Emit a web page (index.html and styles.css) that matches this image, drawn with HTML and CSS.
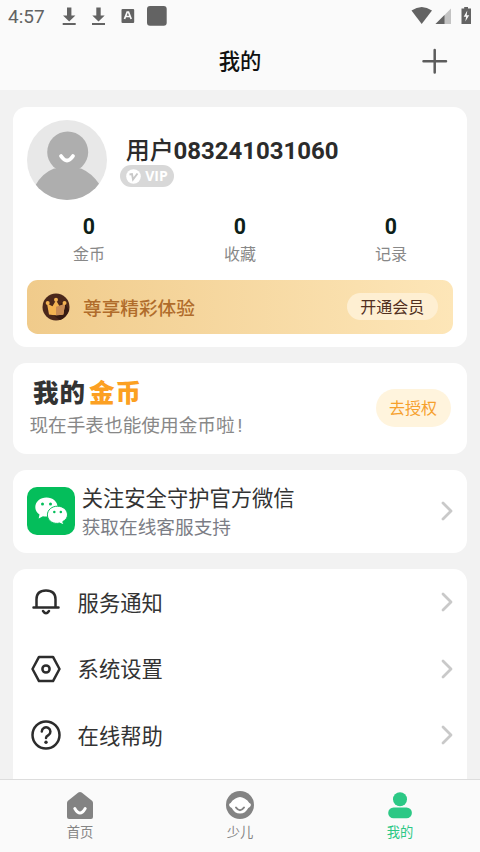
FILE: index.html
```html
<!DOCTYPE html>
<html lang="zh-CN">
<head>
<meta charset="utf-8">
<title>我的</title>
<link rel="stylesheet" href="styles.css">
</head>
<body>
<div class="app">
  <header class="top">
    <div class="status">
      <span class="time">4:57</span>
      <svg class="st-left" width="120" height="24" viewBox="0 0 120 24" fill="#636363">
        <path d="M9 3.500h4.400v8h4L11.200 17.500 5 11.500h4zM4.700 19h13v2h-13z"/>
        <path d="M38.300 3.500h4.400v8h4L40.500 17.500 34.300 11.500h4zM34 19h13v2H34z"/>
        <rect x="63.500" y="5" width="12.700" height="14" rx="1"/>
        <path d="M66.500 15l2.700-7h1.300l2.700 7M67.500 12.500h4.700" fill="none" stroke="#fafafa" stroke-width="1.700"/>
        <rect x="89" y="2" width="19.700" height="19.700" rx="3"/>
      </svg>
      <svg class="st-right" width="64" height="24" viewBox="0 0 64 24" fill="#636363">
        <path d="M1.500 6.500Q11.700-.5 22 6.500L11.700 20z"/>
        <path d="M25.500 20L41 4.500V20z" fill="#c3c3c3"/><path d="M25.500 20L34.500 11v9z"/>
        <path d="M51.500 4.500h2.700V3h3.800v1.500h3V20h-9.500z"/>
        <path d="M57.300 6.500l-3.600 6.200h2.400l-.8 4.800 3.900-6.300h-2.500z" fill="#fafafa"/>
      </svg>
    </div>
    <div class="titlebar">
      <span></span><h1>我的</h1>
      <svg class="plus" width="26" height="26" viewBox="0 0 26 26"><path d="M12.700 2v22.500M1.500 13.200H24" stroke="#5c5c5c" stroke-width="2.500" stroke-linecap="round"/></svg>
    </div>
  </header>
  <main>
    <section class="card profile">
      <div class="user">
        <svg class="avatar" width="80" height="80" viewBox="0 0 80 80">
          <defs><clipPath id="round"><circle cx="40" cy="40" r="40"/></clipPath></defs>
          <circle cx="40" cy="40" r="40" fill="#e8e8e8"/>
          <g clip-path="url(#round)" fill="#aeaeae"><circle cx="40.700" cy="32" r="20.500"/><path d="M27 48.500H54Q65 53 73 65V80H8V66Q15 53 27 48.500z"/></g>
          <path d="M34 36Q40 45 46 36" fill="none" stroke="#fff" stroke-width="3.800" stroke-linecap="round"/>
        </svg>
        <div class="ident">
          <div class="name"><span>用户</span>083241031060</div>
          <div class="vip"><svg width="15" height="15" viewBox="0 0 15 15"><circle cx="7.500" cy="7.500" r="7.300" fill="#fff"/><path d="M3.500 5.500L6 5l1 5.500 4.500-6" fill="none" stroke="#c8c8c8" stroke-width="1.900"/></svg><span>VIP</span></div>
        </div>
      </div>
      <div class="stats">
        <div><b>0</b><span>金币</span></div>
        <div><b>0</b><span>收藏</span></div>
        <div><b>0</b><span>记录</span></div>
      </div>
      <div class="member">
        <svg width="28" height="28" viewBox="0 0 28 28">
          <circle cx="14" cy="14" r="13.500" fill="#4b281b"/>
          <path d="M11 22l10-14 6 9Q24 25 18 27z" fill="#351a13"/>
          <path d="M7 21.500L5 10.500l5.500 2.700 3.500-6 3.500 6 5.700-2.700-1.900 11q-7.200 1.600-14.300 0z" fill="#f3b352"/>
          <path d="M20 11.700l3.200-1.200-1.900 11q-3.500.8-7.300.8v-8.500z" fill="#c88c56"/>
          <circle cx="5.700" cy="10" r="2" fill="#f3b352"/><circle cx="14" cy="6.700" r="2" fill="#f3b352"/><circle cx="22.500" cy="10" r="2" fill="#f3b352"/>
        </svg>
        <span class="slogan">尊享精彩体验</span>
        <span class="open">开通会员</span>
      </div>
    </section>
    <section class="card coins">
      <div><div class="coin-title"><span>我的</span><em>金币</em></div><div class="coin-sub">现在手表也能使用金币啦<i>!</i></div></div>
      <span class="grant">去授权</span>
    </section>
    <section class="card wechat">
      <svg width="48" height="48" viewBox="0 0 48 48">
        <rect width="48" height="48" rx="10" fill="#04be5b"/>
        <path d="M19.500 10.500c-6.300 0-11.200 4.200-11.200 9.600 0 3.100 1.600 5.700 4.200 7.500L11.700 31.500l4.200-2.300c6.500 1.500 14.700-1.500 14.700-9.100 0-5.400-4.800-9.600-11.100-9.600z" fill="#fff"/>
        <path d="M30.500 19.200c-5.700 0-10.100 3.700-10.100 8.700 0 6.200 6.500 9.700 12.300 8.100l4 2.100-.9-3.500c2.800-1.600 4.700-3.900 4.700-6.700 0-5-4.400-8.700-10-8.700z" fill="#fff" stroke="#04be5b" stroke-width="1"/>
        <g fill="#04be5b"><circle cx="15.500" cy="17" r="1.500"/><circle cx="23.500" cy="17" r="1.500"/><circle cx="27.300" cy="25" r="1.250"/><circle cx="33.800" cy="25" r="1.250"/></g>
      </svg>
      <div class="wx-text"><div class="wx-title">关注安全守护官方微信</div><div class="wx-sub">获取在线客服支持</div></div>
      <svg class="chev" width="12" height="20" viewBox="0 0 12 20"><path d="M2 2l8 8-8 8"/></svg>
    </section>
    <section class="card menu">
      <div class="row">
        <svg class="ico" width="30" height="30" viewBox="0 0 30 30"><path d="M2.500 20.500h25M5.500 20.500V12.200q0-8.800 9.500-8.800t9.500 8.800v8.300M12 24q3 4.600 6 0"/></svg>
        <span>服务通知</span><svg class="chev" width="12" height="20" viewBox="0 0 12 20"><path d="M2 2l8 8-8 8"/></svg>
      </div>
      <div class="row">
        <svg class="ico" width="30" height="30" viewBox="0 0 30 30"><path d="M8 2.900h14L28.500 15 22 27.100H8L1.500 15z"/><circle cx="15" cy="15" r="3.600"/></svg>
        <span>系统设置</span><svg class="chev" width="12" height="20" viewBox="0 0 12 20"><path d="M2 2l8 8-8 8"/></svg>
      </div>
      <div class="row">
        <svg class="ico" width="30" height="30" viewBox="0 0 30 30"><circle cx="15" cy="15" r="13.500"/><path d="M10.800 11.500a4.300 4.300 0 1 1 6.600 3.700q-2.400 1.300-2.400 2.800"/><circle class="dot" cx="15" cy="22.300" r="1.700"/></svg>
        <span>在线帮助</span><svg class="chev" width="12" height="20" viewBox="0 0 12 20"><path d="M2 2l8 8-8 8"/></svg>
      </div>
    </section>
  </main>
  <nav>
    <a><svg width="28" height="28" viewBox="0 0 28 28"><path d="M12.300 1.600q1.700-1.300 3.400 0L26 9.800q1 .8 1 2V26q0 2-2 2H3q-2 0-2-2V11.800q0-1.200 1-2z" fill="#838383"/><path d="M8.800 17.500q5.200 9 10.400 0" fill="none" stroke="#fff" stroke-width="3" stroke-linecap="round"/></svg><span>首页</span></a>
    <a><svg width="28" height="28" viewBox="0 0 28 28"><circle cx="14" cy="14" r="14" fill="#838383"/><path d="M9.500 7.500q4.500-3 9 0 3.500 1.500 4.800 4.500 2.500 1 1.100 3.200-.8 1-2.200 1.700Q19.500 22.500 14 22.500T5.800 16.900q-1.400-.7-2.200-1.700Q2.200 13 4.700 12 6 9 9.500 7.500z" fill="#fff"/><path d="M10 16.500q4 5.500 8 0" fill="none" stroke="#838383" stroke-width="2" stroke-linecap="round"/></svg><span>少儿</span></a>
    <a class="on"><svg width="28" height="28" viewBox="0 0 28 28" fill="#2cc885"><circle cx="14" cy="8.300" r="7"/><rect x="2.200" y="16.500" width="23.700" height="10.800" rx="5.400"/></svg><span>我的</span></a>
  </nav>
</div>
</body>
</html>
```
FILE: styles.css
```css
* { box-sizing: border-box; }
body { margin: 0; font-family: Roboto, "Noto Sans CJK SC", sans-serif; color: #333; background: #f2f2f2; }
svg { display: block; flex: none; }
.app { width: 480px; height: 852px; display: flex; flex-direction: column; overflow: hidden; }
.top { height: 90px; background: #fafafa; flex: none; }
.status { height: 32px; display: flex; align-items: center; padding: 0 6px 0 8px; color: #636363; }
.time { font-size: 19px; line-height: 32px; width: 50px; padding-top: 1px; }
.st-right { margin-left: auto; }
.titlebar { height: 58px; display: grid; grid-template-columns: 1fr auto 1fr; align-items: center; padding: 0 32px; }
h1 { margin: 2px 0 0; font-size: 21.300px; line-height: 32px; font-weight: 500; color: #111; }
.plus { justify-self: end; }
main { flex: 1; min-height: 0; overflow: hidden; display: flex; flex-direction: column; gap: 16px; padding: 17px 13.400px 0; }
.card { background: #fff; border-radius: 13.300px; flex: none; }
.profile { height: 240px; padding: 13.300px 13.300px; display: flex; flex-direction: column; }
.user { display: flex; height: 80px; }
.ident { padding: 15px 0 0 13.500px; }
.name { font-size: 24px; line-height: 32px; height: 30px; font-weight: 700; margin-left: 5.500px; color: #2b2b2b; letter-spacing: -.04px; }
.name span { font-weight: 500; }
.vip { display: flex; align-items: center; gap: 4px; width: 53.500px; height: 21.500px; padding-left: 6px; border-radius: 11px; background: #d8d8d8; color: #fff; font: 700 14px/21px "Open Sans", "Noto Sans", sans-serif; }
.vip span { margin-top: -1px; }
.stats { display: grid; grid-template-columns: repeat(3, 151px); margin: 13px -13.300px 0; }
.stats div { display: flex; flex-direction: column; align-items: center; }
.stats b { font-size: 21.300px; line-height: 28px; font-weight: 700; color: #0d1f19; }
.stats span { font-size: 16px; line-height: 28px; height: 26px; color: #888; }
.member { display: flex; align-items: center; height: 53.500px; margin-top: auto; padding: 0 15.500px 0 15.300px; border-radius: 10.700px; background: linear-gradient(90deg, #f0cb8b, #fde6b8); }
.slogan { margin-left: 13px; font-size: 18.670px; font-weight: 500; color: #b06c2b; }
.open { margin-left: auto; width: 91px; height: 27px; border-radius: 14px; background: #feefd2; text-align: center; font-size: 16px; line-height: 30px; color: #52301f; }
.coins { height: 90.500px; display: flex; align-items: center; justify-content: space-between; padding: 0 16px; }
.coin-title { display: flex; gap: 3px; margin-left: 3.500px; font-size: 25.500px; line-height: 33px; font-weight: 900; letter-spacing: 1px; }
.coin-title em { font-style: normal; color: #fca022; }
.coin-sub { font-size: 18.670px; line-height: 32px; height: 30px; color: #888; }
.coin-sub i { font-style: normal; margin-left: 3px; }
.grant { width: 75px; height: 38px; border-radius: 19px; background: #fff4dd; color: #f6a02c; font-size: 16px; line-height: 40px; text-align: center; }
.wechat { height: 83.500px; display: flex; align-items: center; padding: 0 13.300px; }
.wx-text { margin: 3px 0 0 7px; flex: 1; }
.wx-title { font-size: 21.300px; line-height: 30px; }
.wx-sub { font-size: 18.670px; line-height: 28px; color: #7b7d85; }
.chev { fill: none; stroke: #c9c9c9; stroke-width: 2.800; stroke-linecap: round; stroke-linejoin: round; }
.menu { height: 280px; }
.row { display: flex; align-items: center; height: 66.500px; padding: 0 13.300px 0 17.200px; font-size: 21.300px; }
.row .chev { margin-left: auto; }
.row span { margin: -2px 0 0 17px; }
.ico { fill: none; stroke: #2c2c2c; stroke-width: 2.500; stroke-linecap: round; stroke-linejoin: round; }
.dot { fill: #2c2c2c; stroke: none; }
nav { height: 73px; flex: none; background: #fafafa; border-top: 1px solid #ddd; display: grid; grid-template-columns: repeat(3, 160px); }
nav a { display: flex; flex-direction: column; align-items: center; padding-top: 11px; font-size: 13.300px; color: #858585; }
nav span { line-height: 20px; margin-top: 4px; }
nav .on { color: #2cc885; }
```
